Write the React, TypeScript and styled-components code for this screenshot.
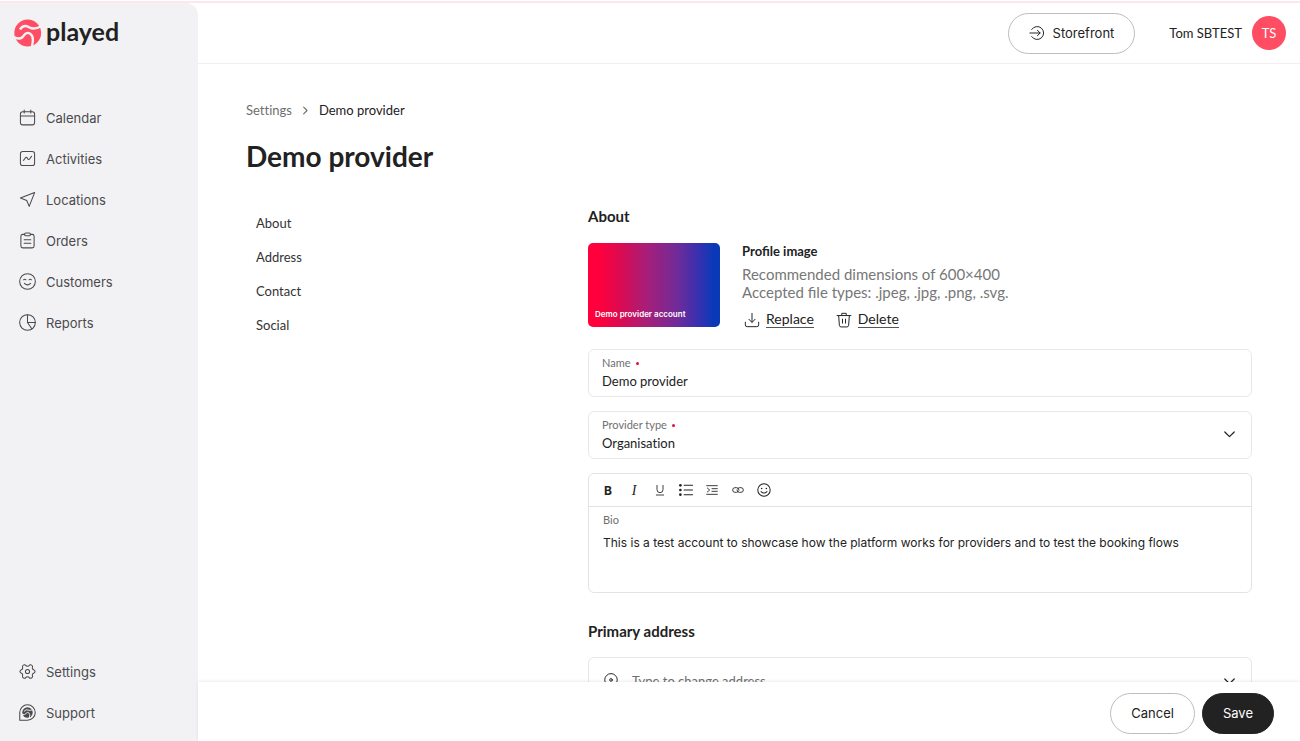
import React, { useState } from 'react';
import styled, { createGlobalStyle } from 'styled-components';

const sans = `Inter, "Liberation Sans", sans-serif`;
const round = `Lato, Inter, sans-serif`;
const ink = '#222222';
const muted = '#6f6f6f';
const line = '#e8e8ea';

const GlobalStyle = createGlobalStyle`
  *, *::before, *::after { box-sizing: border-box; }
  body { margin: 0; background: #ffffff; color: ${ink}; font: 400 13px/20px ${round}; font-variant-ligatures: none; }
  button, input, select, textarea { font: inherit; color: inherit; font-variant-ligatures: none; }
  a { color: inherit; text-decoration: none; }
  ul, ol { list-style: none; margin: 0; padding: 0; }
  h1, h2, h3, p { margin: 0; }
`;

const Shell = styled.div`
  display: flex;
  height: 100vh;
  border-top: 1px solid #ffffff;
  box-shadow: inset 0 2px 0 #fce8ec;
  padding-top: 2px;
  overflow: hidden;
`;

const Sidebar = styled.aside`
  flex: 0 0 198px;
  display: flex;
  flex-direction: column;
  padding-bottom: 8px;
  background: #f2f2f4;
  border-top-right-radius: 12px;
`;

const Brand = styled.a`
  display: flex;
  align-items: center;
  gap: 4px;
  height: 60px;
  padding-left: 14px;
  margin-bottom: 34px;
  font-size: 25px;
  line-height: 28px;
  font-weight: 700;

  span { padding-bottom: 4px; }
`;

const NavItem = styled.a`
  display: flex;
  align-items: center;
  gap: 10px;
  height: 41px;
  padding-left: 19px;
  color: #4a4a4d;
  font-family: ${sans};
`;

const SideNav = styled.nav<{ $end?: boolean }>`
  margin-top: ${(p) => (p.$end ? 'auto' : '0')};
`;

const Page = styled.div`
  flex: 1;
  min-width: 0;
  display: flex;
  flex-direction: column;
`;

const TopBar = styled.header`
  flex: none;
  display: flex;
  justify-content: flex-end;
  align-items: center;
  gap: 34px;
  height: 61px;
  padding-right: 14px;
  border-bottom: 1px solid #f0f0f0;
`;

const User = styled.div`
  display: flex;
  align-items: center;
  gap: 10px;
`;

const Avatar = styled.span`
  display: grid;
  place-items: center;
  width: 34px;
  height: 34px;
  border-radius: 50%;
  background: #ff4d63;
  color: #ffffff;
`;

const Pill = styled.button<{ $dark?: boolean }>`
  display: flex;
  align-items: center;
  gap: 8px;
  height: 41px;
  padding: 0 20px;
  border: 1px solid ${(p) => (p.$dark ? ink : '#bdbdbd')};
  border-radius: 21px;
  background: ${(p) => (p.$dark ? ink : '#ffffff')};
  color: ${(p) => (p.$dark ? '#ffffff' : ink)};
  font-family: ${sans};
  cursor: pointer;
`;

const Content = styled.main`
  flex: 1;
  min-height: 0;
  padding: 36px 48px;
  overflow-y: auto;
  scrollbar-width: none;
`;

const Crumbs = styled.ol`
  display: flex;
  align-items: center;
  gap: 8px;
  color: ${muted};

  li { display: flex; align-items: center; gap: 8px; }
  li:last-child { color: ${ink}; }
`;

const Title = styled.h1`
  margin: 18px 0 32px;
  font-size: 28px;
  line-height: 36px;
  font-weight: 700;
`;

const Columns = styled.div`
  display: grid;
  grid-template-columns: 34fr 66fr;
`;

const SectionNav = styled.nav`
  padding-left: 10px;

  a { display: block; line-height: 34px; color: #333333; }
`;

const Form = styled.form`
  display: flex;
  flex-direction: column;
  min-width: 0;
`;

const SectionTitle = styled.h2<{ $next?: boolean }>`
  margin: ${(p) => (p.$next ? '28px 0 16px' : '0 0 17px')};
  font-size: 15px;
  line-height: 20px;
  font-weight: 700;
`;

const Profile = styled.div`
  display: flex;
  gap: 22px;
  margin-bottom: 21px;
`;

const ProfileImage = styled.div`
  flex: none;
  display: flex;
  align-items: flex-end;
  width: 132px;
  height: 84px;
  padding: 6px 7px;
  border-radius: 5px;
  background: linear-gradient(90deg, #ff003c 8%, #dc0a50 24%, #a81e78 44%, #6f2b99 68%, #3e2fae 82%, #0a39b8 95%);
  color: #ffffff;
  font-family: ${sans};
  font-size: 8px;
  line-height: 14px;
  font-weight: 600;
`;

const ProfileText = styled.div`
  font-variant-ligatures: normal;

  h3 { margin-bottom: 6px; font-size: 13px; line-height: 16px; font-weight: 700; }
  p { color: #777777; font-size: 15px; line-height: 18px; }
`;

const Actions = styled.div`
  display: flex;
  gap: 22px;
  margin-top: 10px;
  padding-left: 2px;
`;

const LinkButton = styled.button`
  display: flex;
  align-items: center;
  gap: 6px;
  padding: 0;
  border: 0;
  background: none;
  font-size: 14px;
  cursor: pointer;

  span { line-height: 16px; border-bottom: 1px solid #555555; }
`;

const Fields = styled.div`
  display: flex;
  flex-direction: column;
  gap: 14px;
`;

const Field = styled.div`
  display: grid;
  grid-template-columns: 1fr auto;
  align-content: center;
  align-items: center;
  height: 48px;
  padding: 0 15px 0 13px;
  border: 1px solid ${line};
  border-radius: 6px;

  label { grid-column: 1 / -1; }
`;

const Label = styled.label<{ $required?: boolean }>`
  display: flex;
  align-items: center;
  gap: 5px;
  color: ${muted};
  font-size: 11px;
  line-height: 16px;

  &::after {
    content: '';
    display: ${(p) => (p.$required ? 'block' : 'none')};
    width: 3px;
    height: 3px;
    border-radius: 50%;
    background: #e0103c;
  }
`;

const control = `
  width: 100%;
  min-width: 0;
  margin: 0;
  padding: 0;
  border: 0;
  outline: 0;
  background: none;
  line-height: 20px;
`;

const TextInput = styled.input`
  ${control}
  height: 20px;
  &::placeholder { color: ${muted}; opacity: 1; }
`;

const Select = styled.select`
  ${control}
  height: 20px;
  appearance: none;
`;

const Caret = styled.span`
  display: flex;
  margin-top: -18px;
  pointer-events: none;
`;

const Editor = styled.div`
  display: flex;
  flex-direction: column;
  height: 120px;
  border: 1px solid #e0e3ea;
  border-radius: 6px;
`;

const Toolbar = styled.div`
  display: flex;
  align-items: center;
  gap: 8px;
  height: 33px;
  padding-left: 10px;
  border-bottom: 1px solid #e0e3ea;
`;

const Tool = styled.button`
  display: grid;
  place-items: center;
  width: 18px;
  height: 18px;
  padding: 0;
  border: 0;
  background: none;
  cursor: pointer;
`;

const EditorBody = styled.div`
  flex: 1;
  display: flex;
  flex-direction: column;
  gap: 5px;
  padding: 5px 14px;
`;

const TextArea = styled.textarea`
  ${control}
  flex: 1;
  resize: none;
  font-family: ${sans};
  font-size: 12px;
`;

const AddressField = styled.div`
  display: flex;
  align-items: center;
  gap: 13px;
  height: 48px;
  padding: 0 15px 0 14px;
  border: 1px solid ${line};
  border-radius: 6px;

  svg { flex: none; }
`;

const Footer = styled.footer`
  flex: none;
  display: flex;
  justify-content: flex-end;
  align-items: center;
  gap: 7px;
  height: 59px;
  padding: 3px 26px 0 0;
  background: #ffffff;
  box-shadow: 0 -1px 3px rgba(0, 0, 0, 0.08);
  z-index: 1;
`;

type IconProps = { size?: number; weight?: number; children: React.ReactNode };

const Icon = ({ size = 17, weight = 1.1, children }: IconProps) => (
  <svg width={size} height={size} viewBox="0 0 18 18" fill="none" stroke="currentColor"
    strokeWidth={weight} strokeLinecap="round" strokeLinejoin="round" aria-hidden="true">
    {children}
  </svg>
);

const dot = { fill: 'currentColor', stroke: 'none' };

const Logo = () => (
  <svg width="28" height="28" viewBox="0 0 28 28" fill="none" aria-hidden="true">
    <circle cx="13.7" cy="14" r="13.4" fill="#ff4d63" />
    <g stroke="#f2f2f4" strokeWidth="2.4">
      <path d="M6 10.500C8.200 7 11.500 6.200 15 8.200c3.300 2 7 2.300 13-1.500" />
      <path d="M0 18.200c4.500 2.200 8 1.400 9.700-1.500 1.700-3 4.200-3.400 6.500-2 3.200 2 3.500 6.300 1.500 13.500" />
    </g>
  </svg>
);

const mainNav = [
  { label: 'Calendar', icon: <><rect x="1.5" y="2.8" width="15" height="14" rx="2.5" /><path d="M1.5 7.300h15M5.500 1v3.200M12.500 1v3.200" /></> },
  { label: 'Activities', icon: <><rect x="1.5" y="1.5" width="15" height="15" rx="2.5" /><path d="M4.800 11l2.200-3 1.200-.2 1.600 2.200 1.200-.2 2.200-3" /></> },
  { label: 'Locations', icon: <path d="M16.500 1.700 1.500 7.500l6.700 2.600 2.600 6.200z" /> },
  { label: 'Orders', icon: <><path d="M6 2.500H4A2 2 0 0 0 2 4.500v10.300a2 2 0 0 0 2 2h10a2 2 0 0 0 2-2V4.500a2 2 0 0 0-2-2h-2" /><rect x="6" y="1" width="6" height="3" rx="1.2" /><path d="M5.500 8.200h7M5.500 12h7" /></> },
  { label: 'Customers', icon: <><circle cx="9" cy="9" r="8.3" /><path d="M4.800 7.200q1.300-1.200 2.600 0M10.600 7.200q1.300-1.200 2.600 0M5.700 11q3.300 3.200 6.600 0" /></> },
  { label: 'Reports', icon: <><circle cx="9" cy="9" r="8.3" /><path d="M9 .7V9h8.300M9 9l4.700 6.800" /></> },
];

const endNav = [
  { label: 'Settings', icon: <><path d="M7.200 2.700C6.600 1.300 4.800 1.600 3.900 2.900 3.100 4 4.500 5 3.700 6.200 3 7.300 1 7 1 9s2 1.700 2.700 2.800c.8 1.200-.6 2.200.2 3.300.9 1.300 2.700 1.600 3.300.2.500-1.100 3.100-1.100 3.600 0 .6 1.400 2.400 1.100 3.300-.2.800-1.100-.6-2.100.2-3.300C15 10.700 17 11 17 9s-2-1.700-2.700-2.800c-.8-1.200.6-2.200-.2-3.300-.9-1.300-2.700-1.600-3.300-.2-.5 1.100-3.100 1.100-3.600 0z" /><circle cx="9" cy="9" r="2.2" /></> },
  { label: 'Support', icon: <><path d="M.8 17.200V9A8.200 8.200 0 1 1 9 17.200z" /><circle cx="9" cy="9" r="5.5" fill="currentColor" stroke="none" /><path stroke="#f2f2f4" strokeWidth="1" d="M5.500 7.600q2-2.400 4-1.200t5-.5M3.500 11q2.800.9 4-1t3-.6.5 5.200" /></> },
];

const tools = [
  { label: 'Underline', icon: <><path d="M4.500 2v6.500a4.500 4.500 0 0 0 9 0V2" /><path d="M3.500 16.500h11" /></>, size: 12 },
  { label: 'Bulleted list', icon: <><path d="M6.500 3h11M6.500 9h11M6.500 15h11" /><circle cx="1.8" cy="3" r="1.7" {...dot} /><circle cx="1.8" cy="9" r="1.7" {...dot} /><circle cx="1.8" cy="15" r="1.7" {...dot} /></>, size: 14 },
  { label: 'Indent', icon: <path d="M1 2.500h16M9 7h8M9 11h8M1 15.500h16M2 6l3.500 3L2 12" />, size: 12 },
  { label: 'Link', icon: <><path d="M9.800 10.500A3.700 3.700 0 0 1 7 12.500H4.500a3.500 3.500 0 0 1 0-7H7a3.500 3.500 0 0 1 3.500 3.500" /><path d="M8.200 7.500A3.700 3.700 0 0 1 11 5.500h2.500a3.500 3.500 0 0 1 0 7H11A3.500 3.500 0 0 1 7.500 9" /></>, size: 12 },
  { label: 'Emoji', icon: <><circle cx="9" cy="9" r="8" /><circle cx="6" cy="7" r="1" {...dot} /><circle cx="12" cy="7" r="1" {...dot} /><path d="M5.200 11q3.800 4 7.600 0" /></>, size: 14 },
];

const BoldGlyph = styled.b`
  font-family: ${sans};
  font-size: 12px;
`;

const ItalicGlyph = styled.i`
  font-family: "Liberation Serif", serif;
  font-size: 14px;
`;

const Chevron = () => <Icon size={13} weight={1.7}><path d="M2.500 5.500 9 12l6.500-6.500" /></Icon>;

export default function App() {
  const [name, setName] = useState('Demo provider');
  const [bio, setBio] = useState('This is a test account to showcase how the platform works for providers and to test the booking flows');

  return (
    <>
      <GlobalStyle />
      <Shell>
        <Sidebar>
          <Brand href="#"><Logo /><span>played</span></Brand>
          <SideNav aria-label="Main">
            {mainNav.map((n) => <NavItem key={n.label} href="#"><Icon>{n.icon}</Icon>{n.label}</NavItem>)}
          </SideNav>
          <SideNav $end aria-label="Help and settings">
            {endNav.map((n) => <NavItem key={n.label} href="#"><Icon>{n.icon}</Icon>{n.label}</NavItem>)}
          </SideNav>
        </Sidebar>

        <Page>
          <TopBar>
            <Pill type="button">
              <Icon size={16}><path d="M3 5A7.300 7.300 0 1 1 3 13M1 9h11.500M9.500 6l3 3-3 3" /></Icon>
              Storefront
            </Pill>
            <User>Tom SBTEST<Avatar>TS</Avatar></User>
          </TopBar>

          <Content>
            <nav aria-label="Breadcrumb">
              <Crumbs>
                <li><a href="#">Settings</a><Icon size={11} weight={1.9}><path d="M6 3.500 11.500 9 6 14.500" /></Icon></li>
                <li>Demo provider</li>
              </Crumbs>
            </nav>
            <Title>Demo provider</Title>

            <Columns>
              <SectionNav aria-label="Sections">
                {['About', 'Address', 'Contact', 'Social'].map((s) => <a key={s} href={'#' + s.toLowerCase()}>{s}</a>)}
              </SectionNav>

              <Form id="provider" onSubmit={(e) => e.preventDefault()}>
                <SectionTitle id="about">About</SectionTitle>
                <Profile>
                  <ProfileImage>Demo provider account</ProfileImage>
                  <ProfileText>
                    <h3>Profile image</h3>
                    <p>Recommended dimensions of 600×400</p>
                    <p>Accepted file types: .jpeg, .jpg, .png, .svg.</p>
                    <Actions>
                      <LinkButton type="button">
                        <Icon size={16}><path d="M9 1.500v10M5.500 8.200 9 11.700l3.500-3.500M1.500 11.500v3a2 2 0 0 0 2 2h11a2 2 0 0 0 2-2v-3" /></Icon>
                        <span>Replace</span>
                      </LinkButton>
                      <LinkButton type="button">
                        <Icon size={16}><path d="M1.200 4h15.600M6.500 4V1.500h5V4M3 4l.8 11a2 2 0 0 0 2 1.800h6.400a2 2 0 0 0 2-1.800L15 4M7.300 8v4.500M10.700 8v4.500" /></Icon>
                        <span>Delete</span>
                      </LinkButton>
                    </Actions>
                  </ProfileText>
                </Profile>

                <Fields>
                  <Field>
                    <Label htmlFor="name" $required>Name</Label>
                    <TextInput id="name" value={name} onChange={(e) => setName(e.target.value)} />
                  </Field>
                  <Field>
                    <Label htmlFor="type" $required>Provider type</Label>
                    <Select id="type" defaultValue="Organisation">
                      <option>Organisation</option>
                      <option>Individual</option>
                    </Select>
                    <Caret><Chevron /></Caret>
                  </Field>
                  <Editor>
                    <Toolbar role="toolbar" aria-label="Formatting">
                      <Tool type="button" aria-label="Bold"><BoldGlyph>B</BoldGlyph></Tool>
                      <Tool type="button" aria-label="Italic"><ItalicGlyph>I</ItalicGlyph></Tool>
                      {tools.map((t) => (
                        <Tool key={t.label} type="button" aria-label={t.label}><Icon size={t.size} weight={1.3}>{t.icon}</Icon></Tool>
                      ))}
                    </Toolbar>
                    <EditorBody>
                      <Label htmlFor="bio">Bio</Label>
                      <TextArea id="bio" value={bio} onChange={(e) => setBio(e.target.value)} />
                    </EditorBody>
                  </Editor>
                </Fields>

                <SectionTitle id="address" $next>Primary address</SectionTitle>
                <AddressField>
                  <Icon size={16}><path d="M9 17c4-3.500 7-6 7-9.300A7 7 0 0 0 2 7.700C2 11 5 13.500 9 17z" /><circle cx="9" cy="7.8" r="1.5" /></Icon>
                  <TextInput aria-label="Primary address" placeholder="Type to change address" />
                  <Chevron />
                </AddressField>
              </Form>
            </Columns>
          </Content>

          <Footer>
            <Pill type="button">Cancel</Pill>
            <Pill type="submit" form="provider" $dark>Save</Pill>
          </Footer>
        </Page>
      </Shell>
    </>
  );
}
